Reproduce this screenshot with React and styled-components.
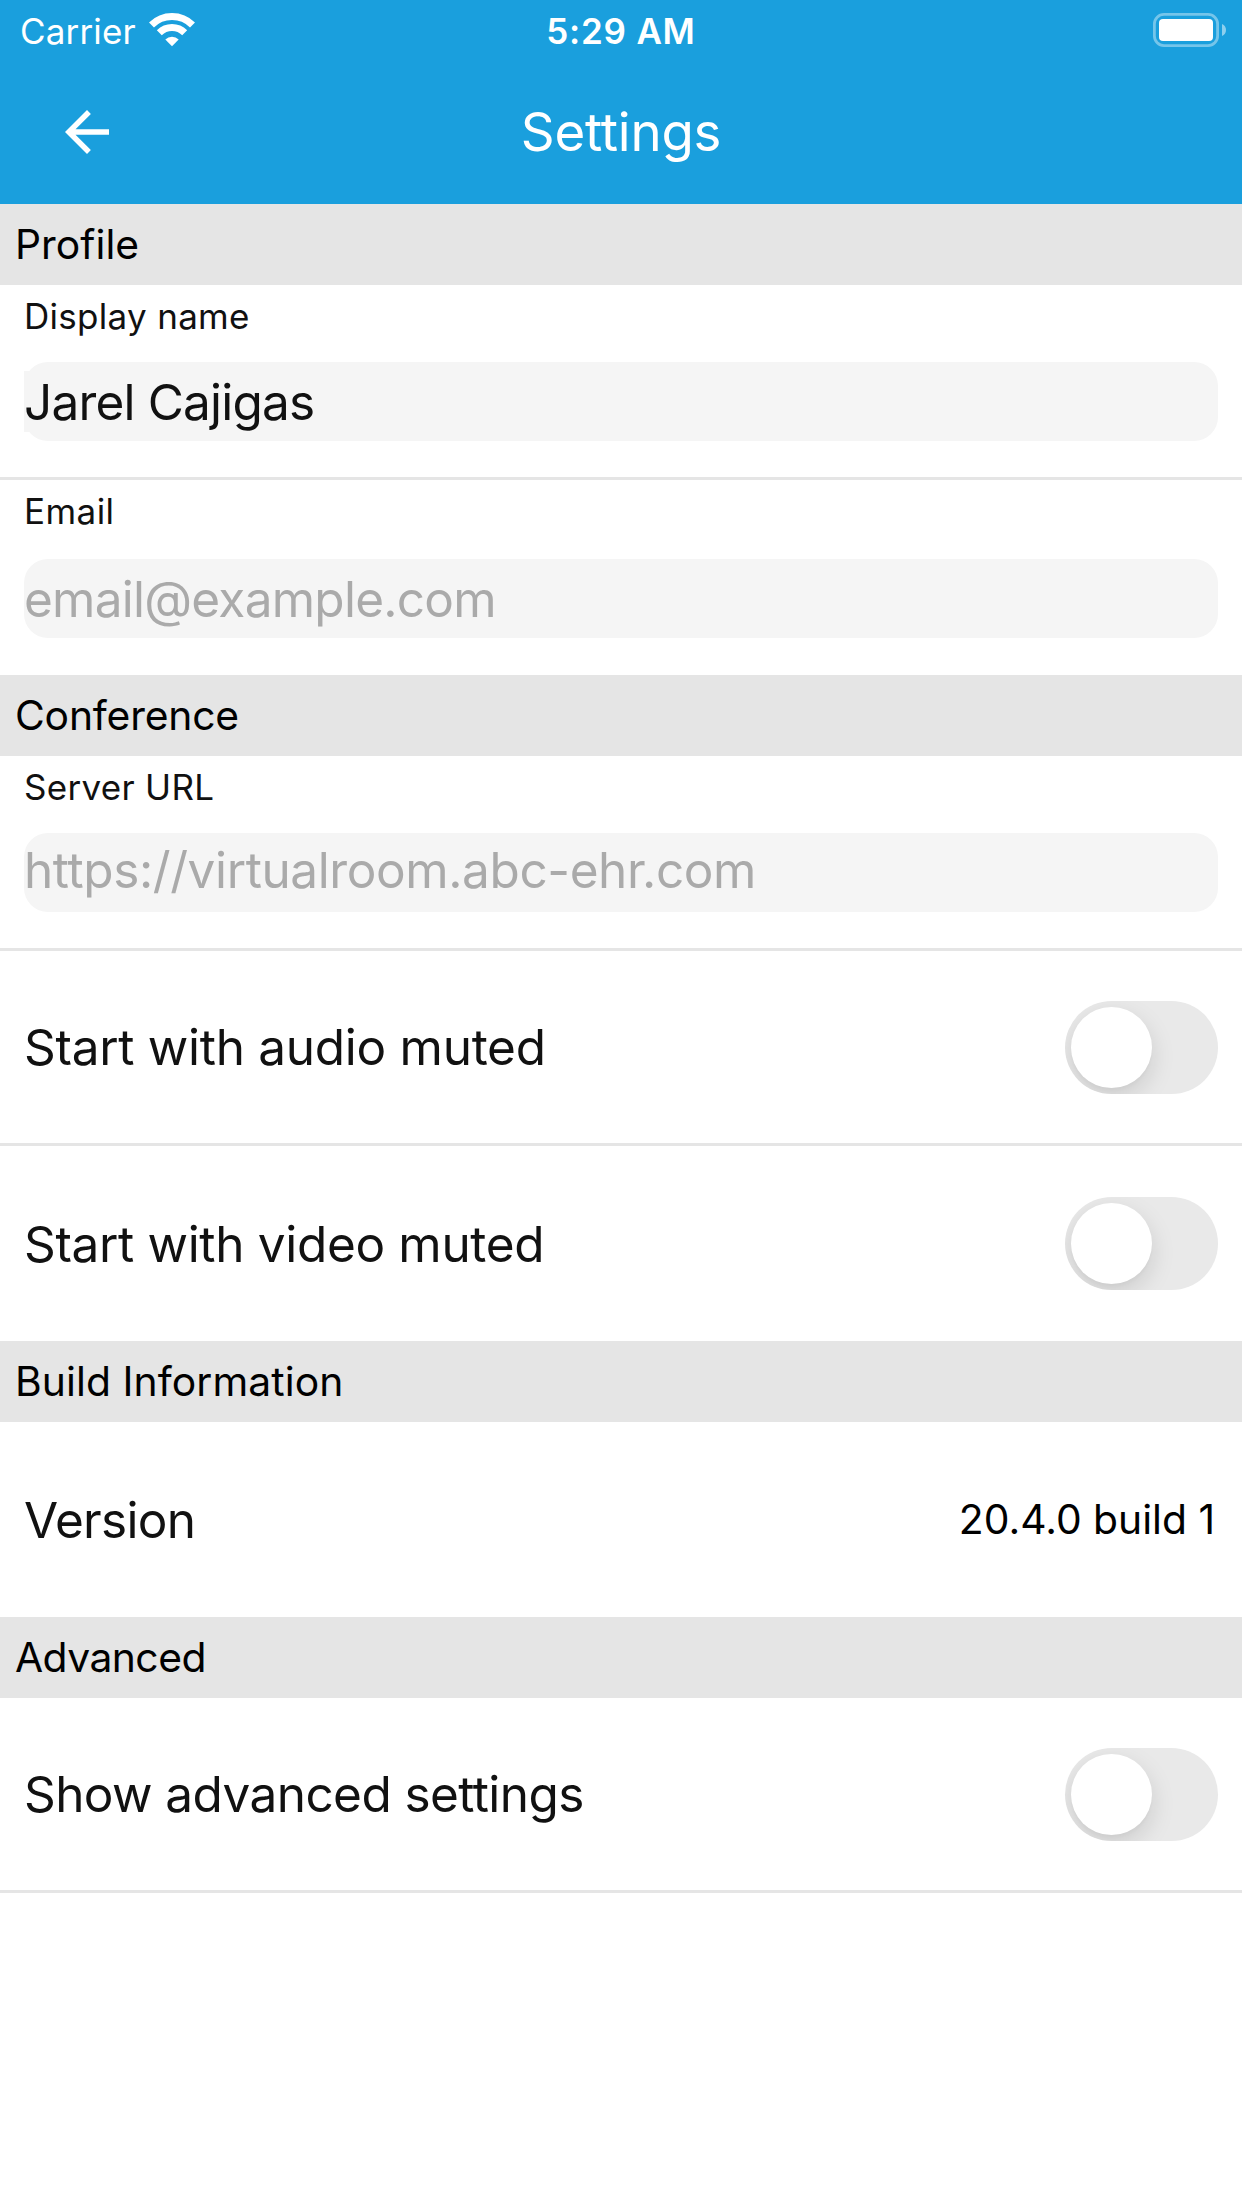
import React from "react";
import styled, { createGlobalStyle } from "styled-components";

const GlobalStyle = createGlobalStyle`
  *, *::before, *::after { box-sizing: border-box; }
  body {
    margin: 0;
    background: #fff;
    font-family: Inter, "Liberation Sans", sans-serif;
    -webkit-font-smoothing: antialiased;
  }
`;

const Screen = styled.div`
  display: flex;
  flex-direction: column;
  width: 1242px;
  min-height: 2208px;
  background: #fff;
`;

const Header = styled.header`
  display: flex;
  flex-direction: column;
  height: 204px;
  background: #1a9fdd;
  color: #fff;
`;

const StatusBar = styled.div`
  display: grid;
  grid-template-columns: 1fr auto 1fr;
  align-items: start;
  height: 60px;
  padding: 0 16px 0 20px;
  font-size: 35px;
  line-height: 63px;
`;

const Carrier = styled.div`
  display: flex;
  align-items: flex-start;
  gap: 13px;
  letter-spacing: 0.15px;

  svg {
    margin-top: 13px;
  }
`;

const Clock = styled.div`
  font-weight: 600;
  letter-spacing: 0.78px;
  padding-right: 4px;
`;

const Battery = styled.div`
  justify-self: end;
  display: flex;
  margin-top: 13px;
`;

const NavBar = styled.div`
  display: grid;
  grid-template-columns: 66px 1fr 66px;
  align-items: center;
  height: 144px;
  padding: 0 54px;
`;

const BackButton = styled.button`
  display: flex;
  padding: 0;
  border: 0;
  background: none;
  color: inherit;
`;

const Title = styled.h1`
  margin: 0;
  text-align: center;
  font-size: 52.8px;
  font-weight: 400;
  letter-spacing: -0.2px;
`;

const SectionTitle = styled.h2`
  margin: 0;
  height: 81px;
  padding-left: 15px;
  background: #e5e5e5;
  color: #000;
  font-size: 40.8px;
  font-weight: 400;
  line-height: 81px;
  letter-spacing: ${(p) => p.$spacing}px;
`;

const rowBorder = (p) => (p.$last ? "none" : "3px solid #e5e5e5");

const FieldRow = styled.label`
  display: flex;
  flex-direction: column;
  height: 195px;
  padding: 0 24px;
  border-bottom: ${rowBorder};
`;

const FieldLabel = styled.span`
  height: 63px;
  font-size: 35px;
  line-height: 63px;
  letter-spacing: ${(p) => p.$spacing}px;
  color: #111;
`;

const FieldBox = styled.span`
  display: flex;
  height: 79px;
  margin-top: ${(p) => (p.$last ? 16 : 14)}px;
  padding: ${(p) => 9 - p.$raise}px 0 0;
  border-radius: 24px;
  background: #f5f5f5;
`;

const TextInput = styled.input`
  width: 100%;
  height: 61px;
  padding: 1px 0 0;
  border: 0;
  outline: 0;
  border-radius: 0 24px 24px 0;
  background: ${(p) => (p.value ? "#f5f5f5" : "transparent")};
  color: #111;
  font: 400 49.5px Inter, "Liberation Sans", sans-serif;
  letter-spacing: ${(p) => p.$spacing}px;

  &::placeholder {
    color: #aaa;
    opacity: 1;
  }
`;

const Row = styled.div`
  display: flex;
  align-items: center;
  justify-content: space-between;
  height: 195px;
  padding: 0 24px;
  border-bottom: ${rowBorder};
`;

const RowLabel = styled.span`
  font-size: 49.5px;
  line-height: 60px;
  letter-spacing: ${(p) => p.$spacing}px;
  color: #111;
`;

const RowValue = styled.span`
  padding: 0 3px 2px 0;
  font-size: 40.8px;
  line-height: 50px;
  letter-spacing: 0;
  color: #000;
`;

const Track = styled.button`
  display: flex;
  flex: none;
  width: 153px;
  height: 93px;
  margin: ${(p) => (p.$last ? 0 : 1)}px 0 0;
  padding: 6px;
  border: 0;
  border-radius: 47px;
  background: #e9e9e9;
  overflow: hidden;
`;

const Knob = styled.span`
  width: 81px;
  height: 81px;
  border-radius: 50%;
  background: #fff;
  box-shadow: 0 9px 24px rgba(0, 0, 0, 0.13), 0 3px 3px rgba(0, 0, 0, 0.02);
`;

const WifiIcon = () => (
  <svg width="46" height="34" viewBox="0 0 46 34" fill="none">
    <path d="M2.5 12.1a29 29 0 0 1 41 0" stroke="#fff" strokeWidth="7" />
    <path d="M10.3 19.8a18 18 0 0 1 25.4 0" stroke="#fff" strokeWidth="7" />
    <path d="M23 33.2l-6.7-6.8a9.6 9.6 0 0 1 13.4 0z" fill="#fff" />
  </svg>
);

const BatteryIcon = () => (
  <svg width="73" height="34" viewBox="0 0 73 34" fill="none">
    <rect x="1.4" y="1.4" width="63.2" height="31.2" rx="9.6" stroke="#fff" strokeOpacity="0.4" strokeWidth="2.8" />
    <rect x="6" y="6" width="54" height="22" rx="4" fill="#fff" />
    <path d="M69 11c2.5.8 4 3.2 4 6s-1.5 5.2-4 6z" fill="#fff" fillOpacity="0.5" />
  </svg>
);

const BackIcon = () => (
  <svg width="66" height="66" viewBox="0 0 24 24" fill="currentColor">
    <path d="M20 11H7.83l5.59-5.59L12 4l-8 8 8 8 1.41-1.41L7.83 13H20v-2z" />
  </svg>
);

const Field = ({ label, labelSpacing, spacing, raise = 0, last, ...input }) => (
  <FieldRow $last={last}>
    <FieldLabel $spacing={labelSpacing}>{label}</FieldLabel>
    <FieldBox $last={last} $raise={raise}>
      <TextInput $spacing={spacing} readOnly {...input} />
    </FieldBox>
  </FieldRow>
);

const ToggleRow = ({ label, spacing, last }) => (
  <Row $last={last}>
    <RowLabel $spacing={spacing}>{label}</RowLabel>
    <Track type="button" role="switch" aria-checked="false" aria-label={label} $last={last}>
      <Knob />
    </Track>
  </Row>
);

export default function App() {
  return (
    <>
      <GlobalStyle />
      <Screen>
        <Header>
          <StatusBar>
            <Carrier>
              Carrier
              <WifiIcon />
            </Carrier>
            <Clock>5:29 AM</Clock>
            <Battery>
              <BatteryIcon />
            </Battery>
          </StatusBar>
          <NavBar>
            <BackButton type="button" aria-label="Back">
              <BackIcon />
            </BackButton>
            <Title>Settings</Title>
          </NavBar>
        </Header>

        <SectionTitle $spacing={0.04}>Profile</SectionTitle>
        <Field label="Display name" labelSpacing={0.3} spacing={-0.81} value="Jarel Cajigas" />
        <Field label="Email" labelSpacing={0.44} spacing={-0.74} placeholder="email@example.com" last />

        <SectionTitle $spacing={-0.18}>Conference</SectionTitle>
        <Field
          label="Server URL"
          labelSpacing={0.3}
          spacing={-0.4}
          raise={3}
          placeholder="https://virtualroom.abc-ehr.com"
        />
        <ToggleRow label="Start with audio muted" spacing={-0.28} />
        <ToggleRow label="Start with video muted" spacing={-0.33} last />

        <SectionTitle $spacing={0.09}>Build Information</SectionTitle>
        <Row $last>
          <RowLabel $spacing={-0.7}>Version</RowLabel>
          <RowValue>20.4.0 build 1</RowValue>
        </Row>

        <SectionTitle $spacing={-0.54}>Advanced</SectionTitle>
        <ToggleRow label="Show advanced settings" spacing={-0.58} />
      </Screen>
    </>
  );
}
